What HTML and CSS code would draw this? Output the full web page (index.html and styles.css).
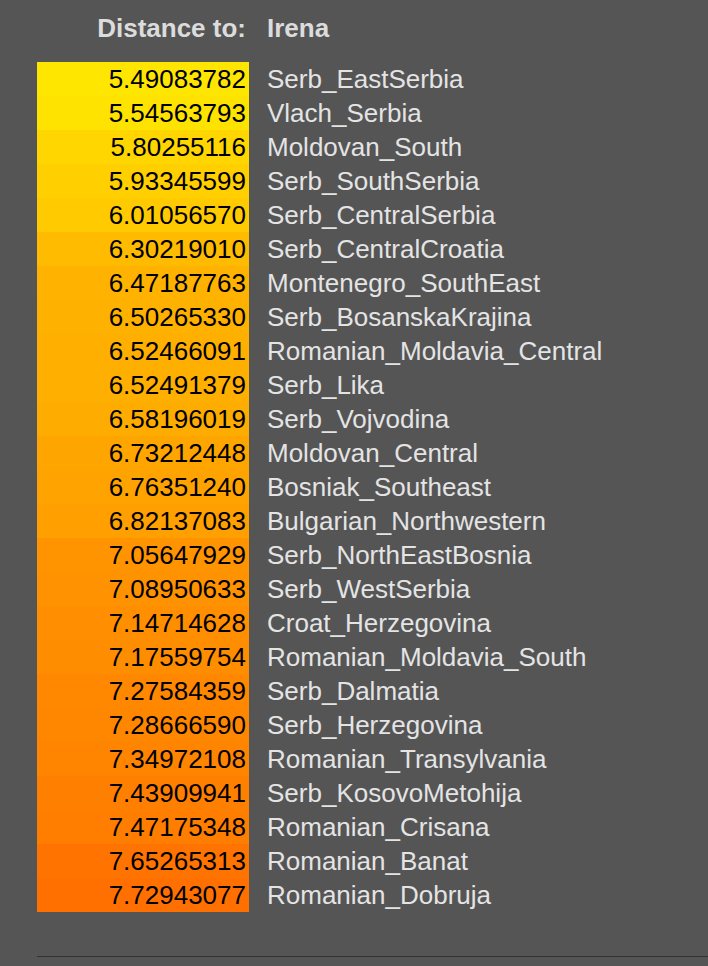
FILE: index.html
```html
<!DOCTYPE html>
<html>
<head>
<meta charset="utf-8">
<link rel="stylesheet" href="styles.css">
</head>
<body>
<div class="page">
  <div class="dist">
    <div class="head-label">Distance to:</div>
    <div class="head-name">Irena</div>

    <div class="val" style="background:#ffe600">5.49083782</div><div class="name">Serb_EastSerbia</div>
    <div class="val" style="background:#ffe300">5.54563793</div><div class="name">Vlach_Serbia</div>
    <div class="val" style="background:#ffd600">5.80255116</div><div class="name">Moldovan_South</div>
    <div class="val" style="background:#ffcf00">5.93345599</div><div class="name">Serb_SouthSerbia</div>
    <div class="val" style="background:#ffcb00">6.01056570</div><div class="name">Serb_CentralSerbia</div>
    <div class="val" style="background:#ffbb00">6.30219010</div><div class="name">Serb_CentralCroatia</div>
    <div class="val" style="background:#ffb200">6.47187763</div><div class="name">Montenegro_SouthEast</div>
    <div class="val" style="background:#ffb100">6.50265330</div><div class="name">Serb_BosanskaKrajina</div>
    <div class="val" style="background:#ffaf00">6.52466091</div><div class="name">Romanian_Moldavia_Central</div>
    <div class="val" style="background:#ffaf00">6.52491379</div><div class="name">Serb_Lika</div>
    <div class="val" style="background:#ffac00">6.58196019</div><div class="name">Serb_Vojvodina</div>
    <div class="val" style="background:#ffa500">6.73212448</div><div class="name">Moldovan_Central</div>
    <div class="val" style="background:#ffa300">6.76351240</div><div class="name">Bosniak_Southeast</div>
    <div class="val" style="background:#ffa000">6.82137083</div><div class="name">Bulgarian_Northwestern</div>
    <div class="val" style="background:#ff9400">7.05647929</div><div class="name">Serb_NorthEastBosnia</div>
    <div class="val" style="background:#ff9200">7.08950633</div><div class="name">Serb_WestSerbia</div>
    <div class="val" style="background:#ff8f00">7.14714628</div><div class="name">Croat_Herzegovina</div>
    <div class="val" style="background:#ff8d00">7.17559754</div><div class="name">Romanian_Moldavia_South</div>
    <div class="val" style="background:#ff8800">7.27584359</div><div class="name">Serb_Dalmatia</div>
    <div class="val" style="background:#ff8700">7.28666590</div><div class="name">Serb_Herzegovina</div>
    <div class="val" style="background:#ff8400">7.34972108</div><div class="name">Romanian_Transylvania</div>
    <div class="val" style="background:#ff7f00">7.43909941</div><div class="name">Serb_KosovoMetohija</div>
    <div class="val" style="background:#ff7e00">7.47175348</div><div class="name">Romanian_Crisana</div>
    <div class="val" style="background:#ff7400">7.65265313</div><div class="name">Romanian_Banat</div>
    <div class="val" style="background:#ff7000">7.72943077</div><div class="name">Romanian_Dobruja</div>
  </div>
  <div class="rule"></div>
</div>
</body>
</html>
```
FILE: styles.css
```css
html, body {
  margin: 0;
  padding: 0;
  background: #555555;
}
body {
  font-family: "Liberation Sans", Arial, sans-serif;
  font-size: 26px;
}
.page {
  padding: 11px 0 0 37px;
}
.dist {
  display: grid;
  grid-template-columns: 212px auto;
  grid-template-rows: 51px;
  column-gap: 18px;
  grid-auto-rows: 34px;
  justify-content: start;
}
.head-label, .head-name {
  font-weight: bold;
  color: #dcdcdc;
  line-height: 34px;
  align-self: start;
}
.head-label {
  text-align: right;
  padding-right: 3px;
}
.val {
  color: #000;
  text-align: right;
  padding-right: 3px;
  line-height: 34px;
}
.name {
  color: #e4e4e4;
  line-height: 34px;
  white-space: nowrap;
}
.rule {
  margin-top: 44px;
  height: 1px;
  border-top: 1px solid #333333;
}
```
